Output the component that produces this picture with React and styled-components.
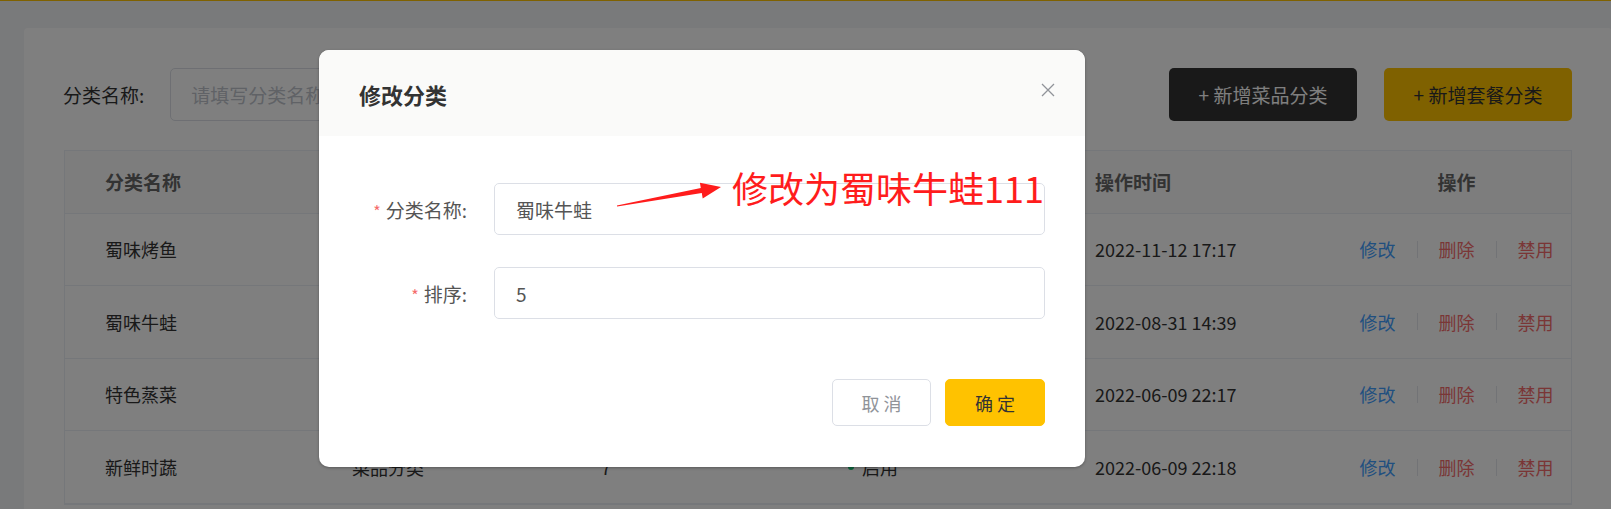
import React from "react";
import styled, { createGlobalStyle } from "styled-components";

const GlobalStyle = createGlobalStyle`
  html, body {
    margin: 0;
    padding: 0;
    overflow: hidden;
    background: #f3f4f7;
  }
  * {
    box-sizing: border-box;
  }
`;

const FONT = `"Noto Sans CJK SC", "Noto Sans", "Liberation Sans", sans-serif`;

const Page = styled.div`
  position: relative;
  width: 1611px;
  height: 509px;
  overflow: hidden;
  background: #f3f4f7;
  font-family: ${FONT};
  color: #333;
`;

const TopBar = styled.div`
  height: 1px;
  background: #ffc200;
`;

const Content = styled.div`
  padding: 27px 0 0 24px;
`;

const Card = styled.div`
  width: 1588px;
  height: 520px;
  background: #fff;
  border-radius: 4px;
  padding: 40px 40px 40px 39px;
`;

const Toolbar = styled.div`
  display: flex;
  align-items: center;
  height: 53px;
`;

const SearchLabel = styled.span`
  font-size: 19px;
  color: #333;
  margin-right: 26px;
`;

const SearchInput = styled.input`
  width: 320px;
  height: 53px;
  border: 1px solid #dcdfe6;
  border-radius: 5px;
  padding: 0 20px;
  font-size: 19px;
  font-family: ${FONT};
  outline: none;
  &::placeholder {
    color: #c0c4cc;
  }
`;

const ToolButtons = styled.div`
  margin-left: auto;
  display: flex;
  gap: 27px;
`;

const ToolButton = styled.button`
  width: 188px;
  height: 53px;
  border: none;
  border-radius: 5px;
  font-size: 19px;
  font-family: ${FONT};
  background: ${(p) => (p.$dark ? "#333333" : "#ffc200")};
  color: ${(p) => (p.$dark ? "#ffffff" : "#333333")};
`;

const Table = styled.div`
  margin-top: 29px;
  margin-left: 1px;
  width: 1508px;
  border: 1px solid #ebeef5;
`;

const Row = styled.div`
  display: grid;
  grid-template-columns: 247px 249px 247px 247px 287px 1fr;
  height: ${(p) => (p.$head ? "62.5px" : "72.6px")};
  border-bottom: 1px solid #ebeef5;
  background: ${(p) => (p.$head ? "#fbfbfb" : "#fff")};
  font-size: ${(p) => (p.$head ? "19px" : "18px")};
  font-weight: ${(p) => (p.$head ? 700 : 400)};
  color: ${(p) => (p.$head ? "#666" : "#333")};
`;

const Cell = styled.div`
  display: flex;
  align-items: center;
  justify-content: ${(p) => (p.$center ? "center" : "flex-start")};
  padding-left: ${(p) => (p.$center ? "0" : "40px")};
  white-space: nowrap;
`;

const StatusDot = styled.span`
  width: 6px;
  height: 6px;
  border-radius: 50%;
  background: #1dc779;
  margin-right: 8px;
`;

const ActionLink = styled.span`
  color: ${(p) => (p.$danger ? "#f56c6c" : "#419eff")};
`;

const ActionSep = styled.span`
  width: 1px;
  height: 17px;
  background: #e4e7ed;
  margin: 0 21px;
`;

const Mask = styled.div`
  position: absolute;
  inset: 0;
  background: rgba(0, 0, 0, 0.5);
`;

const Dialog = styled.div`
  position: absolute;
  left: 319px;
  top: 50px;
  width: 766px;
  background: #fff;
  border-radius: 10px;
  overflow: hidden;
  box-shadow: 0 1px 3px rgba(0, 0, 0, 0.3);
`;

const DialogHeader = styled.div`
  position: relative;
  height: 86px;
  display: flex;
  align-items: center;
  padding: 2px 40px 0;
  background: #fafaf9;
`;

const DialogTitle = styled.div`
  font-size: 22px;
  font-weight: 700;
  color: #333;
`;

const CloseIcon = styled.svg`
  position: absolute;
  top: 33px;
  right: 30px;
`;

const DialogBody = styled.div`
  padding: 47px 40px 60px;
  display: flex;
  flex-direction: column;
  gap: 32px;
`;

const FormItem = styled.div`
  display: flex;
  align-items: center;
`;

const FormLabel = styled.label`
  width: 135px;
  padding-right: 27px;
  text-align: right;
  font-size: 19px;
  color: #555;
  white-space: nowrap;
`;

const Star = styled.span`
  color: #f56c6c;
  font-size: 16px;
  margin-right: 5px;
`;

const FormInput = styled.input`
  flex: 1;
  height: 52px;
  border: 1px solid #dcdfe6;
  border-radius: 5px;
  padding: 0 21px;
  font-size: 19px;
  font-family: ${FONT};
  color: #555;
  outline: none;
`;

const DialogFooter = styled.div`
  display: flex;
  justify-content: flex-end;
  gap: 14px;
  padding: 0 40px 41px;
`;

const DialogButton = styled.button`
  width: ${(p) => (p.$primary ? "100px" : "99px")};
  height: 47px;
  border-radius: 5px;
  font-size: 18px;
  font-family: ${FONT};
  border: 1px solid ${(p) => (p.$primary ? "#ffc200" : "#dcdfe6")};
  background: ${(p) => (p.$primary ? "#ffc200" : "#fff")};
  color: ${(p) => (p.$primary ? "#333" : "#909399")};
`;

const NoteText = styled.div`
  position: absolute;
  left: 732px;
  top: 169px;
  font-size: 36px;
  line-height: 36px;
  color: #ff1c1c;
  white-space: nowrap;
`;

const NoteArrow = styled.svg`
  position: absolute;
  left: 600px;
  top: 175px;
`;

const rows = [
  { name: "蜀味烤鱼", type: "菜品分类", sort: "4", time: "2022-11-12 17:17" },
  { name: "蜀味牛蛙", type: "菜品分类", sort: "5", time: "2022-08-31 14:39" },
  { name: "特色蒸菜", type: "菜品分类", sort: "6", time: "2022-06-09 22:17" },
  { name: "新鲜时蔬", type: "菜品分类", sort: "7", time: "2022-06-09 22:18" },
];

export default function App() {
  return (
    <Page>
      <GlobalStyle />
      <TopBar />
      <Content>
        <Card>
          <Toolbar>
            <SearchLabel>分类名称:</SearchLabel>
            <SearchInput placeholder="请填写分类名称" readOnly />
            <ToolButtons>
              <ToolButton $dark>+ 新增菜品分类</ToolButton>
              <ToolButton>+ 新增套餐分类</ToolButton>
            </ToolButtons>
          </Toolbar>
          <Table>
            <Row $head>
              <Cell>分类名称</Cell>
              <Cell>分类类型</Cell>
              <Cell>排序</Cell>
              <Cell>状态</Cell>
              <Cell>操作时间</Cell>
              <Cell $center>操作</Cell>
            </Row>
            {rows.map((r) => (
              <Row key={r.name}>
                <Cell>{r.name}</Cell>
                <Cell>{r.type}</Cell>
                <Cell>{r.sort}</Cell>
                <Cell>
                  <StatusDot />
                  启用
                </Cell>
                <Cell>{r.time}</Cell>
                <Cell $center>
                  <ActionLink>修改</ActionLink>
                  <ActionSep />
                  <ActionLink $danger>删除</ActionLink>
                  <ActionSep />
                  <ActionLink $danger>禁用</ActionLink>
                </Cell>
              </Row>
            ))}
          </Table>
        </Card>
      </Content>

      <Mask />

      <Dialog>
        <DialogHeader>
          <DialogTitle>修改分类</DialogTitle>
          <CloseIcon width="14" height="14" viewBox="0 0 14 14">
            <path d="M1 1 L13 13 M13 1 L1 13" stroke="#909399" strokeWidth="1.3" fill="none" />
          </CloseIcon>
        </DialogHeader>
        <DialogBody>
          <FormItem>
            <FormLabel>
              <Star>*</Star>分类名称:
            </FormLabel>
            <FormInput defaultValue="蜀味牛蛙" readOnly />
          </FormItem>
          <FormItem>
            <FormLabel>
              <Star>*</Star>排序:
            </FormLabel>
            <FormInput defaultValue="5" readOnly />
          </FormItem>
        </DialogBody>
        <DialogFooter>
          <DialogButton>取 消</DialogButton>
          <DialogButton $primary>确 定</DialogButton>
        </DialogFooter>
      </Dialog>

      <NoteArrow width="130" height="40" viewBox="0 0 130 40">
        <polygon
          points="16.9,30.5 100.8,13.1 99.9,7.7 121,12 102.7,23.5 101.8,18.1 17.1,31.5"
          fill="#ff1c1c"
        />
      </NoteArrow>
      <NoteText>修改为蜀味牛蛙111</NoteText>
    </Page>
  );
}
